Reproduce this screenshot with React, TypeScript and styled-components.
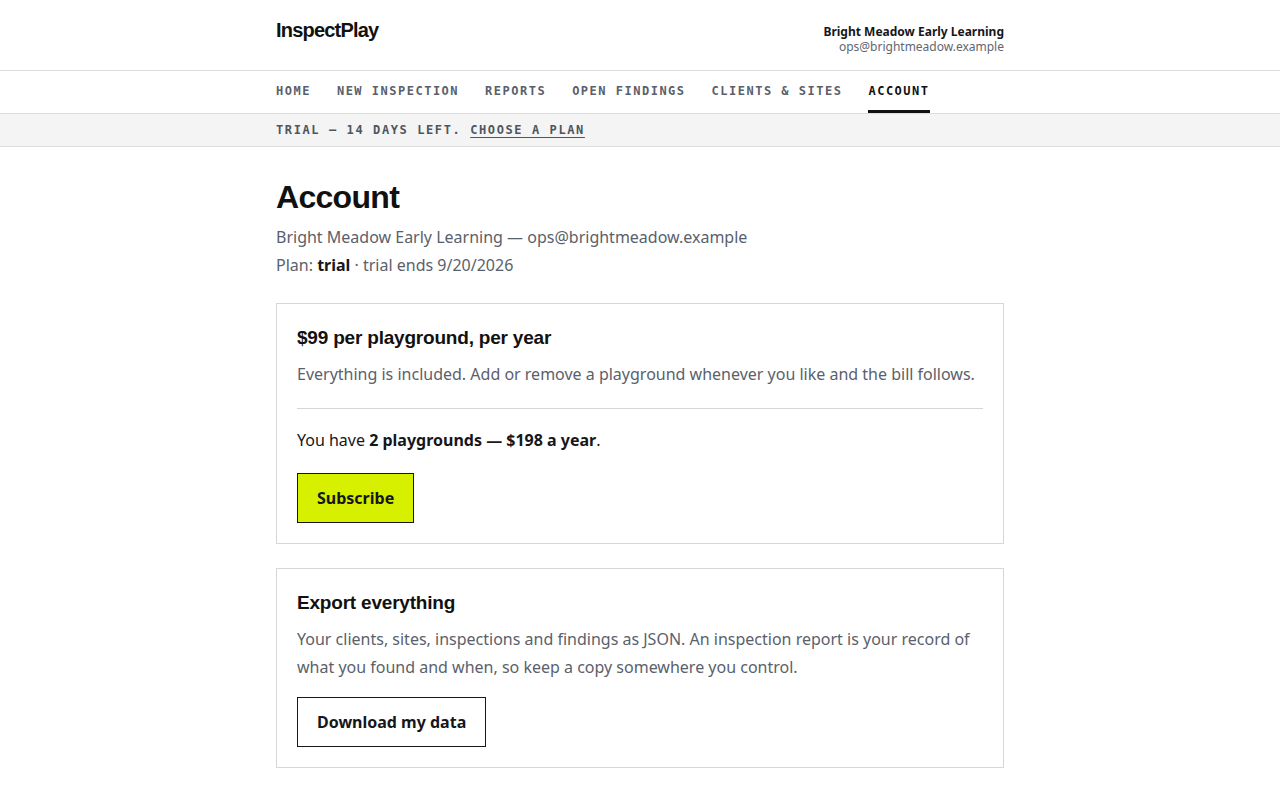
import styled, { createGlobalStyle } from "styled-components";

const GlobalStyle = createGlobalStyle`
  * { box-sizing: border-box; }
  body {
    margin: 0;
    background: #ffffff;
    font-family: "Noto Sans", "Open Sans", sans-serif;
    color: #15171a;
  }
`;

const navItems = [
  "Home",
  "New inspection",
  "Reports",
  "Open findings",
  "Clients & sites",
  "Account",
];

const App = (): JSX.Element => {
  return (
    <Page>
      <GlobalStyle />
      <TopBar>
        <Inner>
          <HeaderRow>
            <Logo>InspectPlay</Logo>
            <Who>
              <strong>Bright Meadow Early Learning</strong>
              <span>ops@brightmeadow.example</span>
            </Who>
          </HeaderRow>
        </Inner>
      </TopBar>
      <NavBar>
        <Inner>
          <NavList>
            {navItems.map((item) => (
              <NavLink key={item} active={item === "Account"}>
                {item}
              </NavLink>
            ))}
          </NavList>
        </Inner>
      </NavBar>
      <Banner>
        <Inner>
          <BannerText>
            Trial — 14 days left. <a href="#">Choose a plan</a>
          </BannerText>
        </Inner>
      </Banner>
      <Inner>
        <Main>
          <Title>Account</Title>
          <Sub>
            <p>Bright Meadow Early Learning — ops@brightmeadow.example</p>
            <p>
              Plan: <b>trial</b> · trial ends 9/20/2026
            </p>
          </Sub>
          <Card>
            <CardTitle>$99 per playground, per year</CardTitle>
            <Muted gap={20}>
              Everything is included. Add or remove a playground whenever you
              like and the bill follows.
            </Muted>
            <Divider />
            <Plain>
              You have <b>2 playgrounds — $198 a year</b>.
            </Plain>
            <Button primary>Subscribe</Button>
          </Card>
          <Card>
            <CardTitle>Export everything</CardTitle>
            <Muted gap={16}>
              Your clients, sites, inspections and findings as JSON. An
              inspection report is your record of what you found and when, so
              keep a copy somewhere you control.
            </Muted>
            <Button>Download my data</Button>
          </Card>
        </Main>
      </Inner>
    </Page>
  );
};

export default App;

const Page = styled.div`
  min-height: 800px;
`;

const Inner = styled.div`
  width: 728px;
  margin: 0 auto;
`;

const TopBar = styled.header`
  border-bottom: 1px solid #dcdcdc;
`;

const HeaderRow = styled.div`
  height: 70px;
  padding-top: 18px;
  display: flex;
  justify-content: space-between;
  align-items: flex-start;
`;

const Logo = styled.div`
  font-family: "Liberation Sans", Arial, sans-serif;
  font-weight: 700;
  font-size: 20px;
  line-height: 24px;
  letter-spacing: -0.8px;
  color: #111;
`;

const Who = styled.div`
  margin-top: 6px;
  display: flex;
  flex-direction: column;
  align-items: flex-end;
  font-size: 12px;
  line-height: 15px;
  strong {
    font-weight: 700;
    color: #15171a;
  }
  span {
    color: #5f6670;
  }
`;

const NavBar = styled.nav`
  border-bottom: 1px solid #dcdcdc;
`;

const NavList = styled.div`
  display: flex;
  gap: 26px;
  height: 42px;
`;

const NavLink = styled.a<{ active?: boolean }>`
  display: flex;
  align-items: center;
  font-family: "DejaVu Sans Mono", "Liberation Mono", monospace;
  font-weight: 700;
  font-size: 12px;
  letter-spacing: 1.5px;
  text-transform: uppercase;
  color: ${(p) => (p.active ? "#111" : "#5a6069")};
  border-bottom: 3px solid ${(p) => (p.active ? "#111" : "transparent")};
  padding-top: 1px;
  cursor: pointer;
`;

const Banner = styled.div`
  background: #f4f4f4;
  border-bottom: 1px solid #dcdcdc;
`;

const BannerText = styled.div`
  height: 32px;
  display: flex;
  align-items: center;
  white-space: pre;
  font-family: "DejaVu Sans Mono", "Liberation Mono", monospace;
  font-weight: 700;
  font-size: 12px;
  letter-spacing: 1.6px;
  text-transform: uppercase;
  color: #4f555d;
  a {
    color: #4f555d;
    text-decoration: underline;
    text-underline-offset: 3px;
  }
`;

const Main = styled.main`
  padding: 31px 0 40px;
  display: flex;
  flex-direction: column;
`;

const Title = styled.h1`
  margin: 0;
  font-family: "Liberation Sans", Arial, sans-serif;
  font-weight: 700;
  font-size: 32px;
  line-height: 38px;
  letter-spacing: -0.7px;
  color: #111;
`;

const Sub = styled.div`
  margin: 7px 0 24px;
  color: #5a616b;
  font-size: 16px;
  line-height: 28px;
  p {
    margin: 0;
  }
  b {
    color: #15171a;
    font-weight: 700;
  }
`;

const Card = styled.section`
  border: 1px solid #d6d6d6;
  padding: 21px 20px 20px;
  display: flex;
  flex-direction: column;
  align-items: flex-start;
  & + & {
    margin-top: 24px;
  }
`;

const CardTitle = styled.h2`
  margin: 0 0 9px;
  font-family: "Liberation Sans", Arial, sans-serif;
  font-weight: 700;
  font-size: 19px;
  line-height: 26px;
  letter-spacing: -0.2px;
  color: #111;
`;

const Muted = styled.p<{ gap: number }>`
  margin: 0 0 ${(p) => p.gap}px;
  color: #5a616b;
  font-size: 16px;
  line-height: 28px;
`;

const Divider = styled.hr`
  align-self: stretch;
  margin: 0 0 17px;
  border: none;
  border-top: 1px solid #d6d6d6;
`;

const Plain = styled.p`
  margin: 0 0 19px;
  font-size: 16px;
  line-height: 28px;
  color: #15171a;
  b {
    font-weight: 700;
  }
`;

const Button = styled.button<{ primary?: boolean }>`
  height: 50px;
  padding: 0 19px;
  border: 1px solid #15171a;
  border-radius: 0;
  background: ${(p) => (p.primary ? "#d6f000" : "#ffffff")};
  color: #15171a;
  font-family: "Noto Sans", sans-serif;
  font-weight: 700;
  font-size: 16px;
  cursor: pointer;
`;
